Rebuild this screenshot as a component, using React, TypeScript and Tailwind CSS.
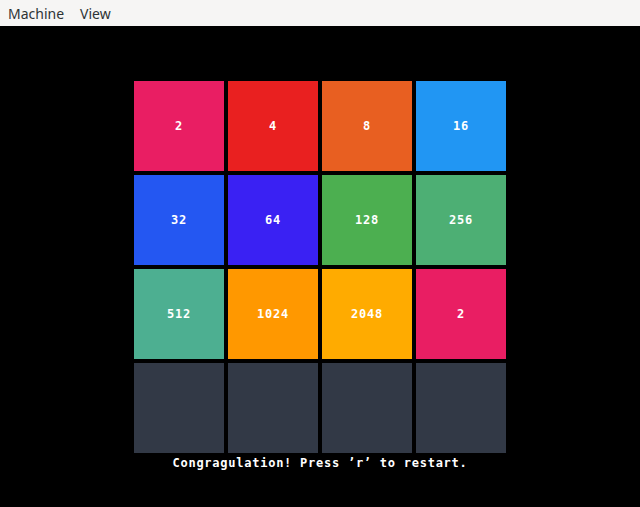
import React from "react";

const tiles: { v: string; c: string }[] = [
  { v: "2", c: "bg-[#e91e63]" },
  { v: "4", c: "bg-[#e92020]" },
  { v: "8", c: "bg-[#e85f21]" },
  { v: "16", c: "bg-[#2196f3]" },
  { v: "32", c: "bg-[#2457f2]" },
  { v: "64", c: "bg-[#3a21f3]" },
  { v: "128", c: "bg-[#4caf50]" },
  { v: "256", c: "bg-[#4daf74]" },
  { v: "512", c: "bg-[#4daf91]" },
  { v: "1024", c: "bg-[#ff9800]" },
  { v: "2048", c: "bg-[#ffab00]" },
  { v: "2", c: "bg-[#e91e63]" },
  { v: "", c: "bg-[#323946]" },
  { v: "", c: "bg-[#323946]" },
  { v: "", c: "bg-[#323946]" },
  { v: "", c: "bg-[#323946]" },
];

export default function App() {
  return (
    <div className="w-[640px] h-[507px] bg-black flex flex-col overflow-hidden">
      <div className="h-[26px] bg-[#f6f5f4] flex items-center gap-[16px] px-[8px] text-[14px] text-[#2e3436] font-['Noto_Sans',sans-serif] shrink-0">
        <span>Machine</span>
        <span>View</span>
      </div>
      <div className="flex flex-col items-center pt-[55px]">
        <div className="grid grid-cols-[repeat(4,90px)] grid-rows-[repeat(4,90px)] gap-[4px]">
          {tiles.map((t, i) => (
            <div
              key={i}
              className={`${t.c} flex items-center justify-center text-white font-bold text-[12px] tracking-[0.75px] font-['DejaVu_Sans_Mono',monospace]`}
            >
              {t.v}
            </div>
          ))}
        </div>
        <div className="mt-[2px] text-white font-bold text-[12px] tracking-[0.75px] font-['DejaVu_Sans_Mono',monospace] leading-[16px] whitespace-pre">
          Congragulation! Press ’r’ to restart.
        </div>
      </div>
    </div>
  );
}
